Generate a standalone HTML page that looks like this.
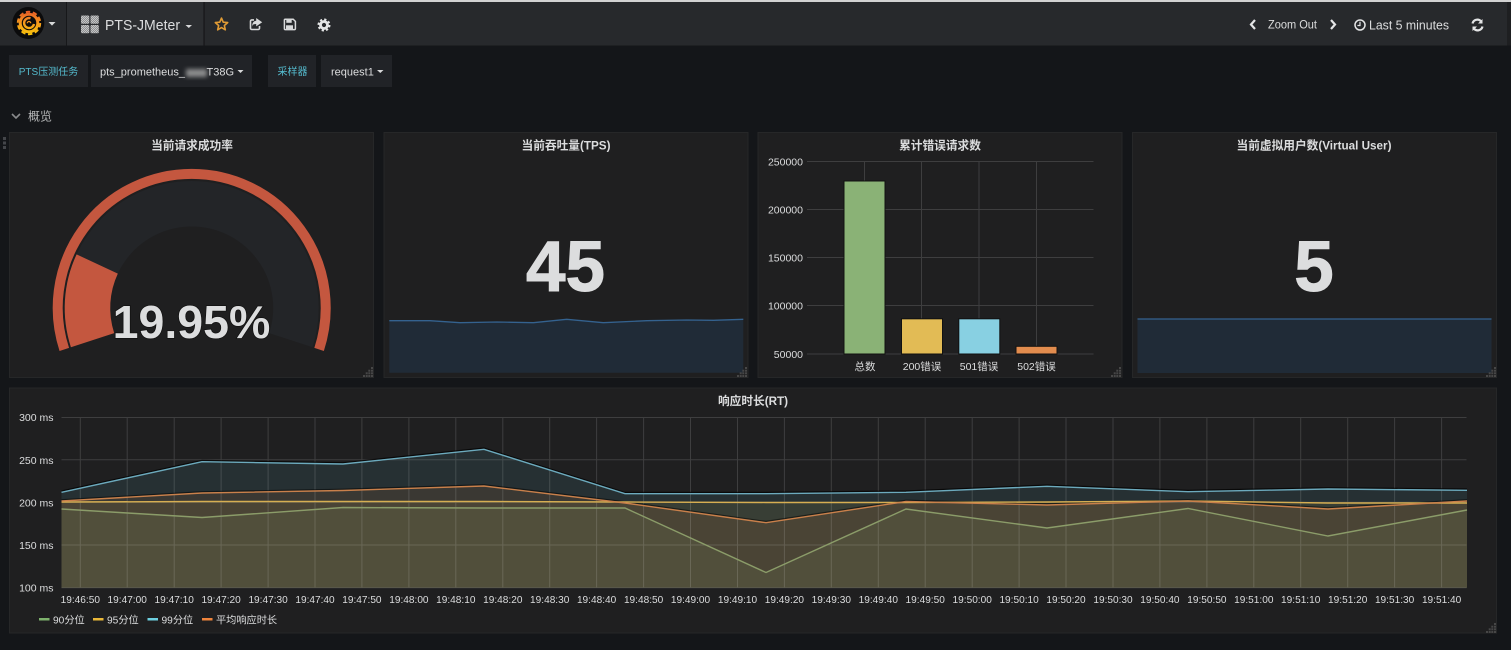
<!DOCTYPE html>
<html><head><meta charset="utf-8"><title>PTS-JMeter</title>
<style>
html,body{margin:0;padding:0;width:1511px;height:650px;overflow:hidden;background:#141619}
svg{display:block;filter:blur(.35px)}
text{font-family:"Liberation Sans","Noto Sans CJK SC",sans-serif;fill:#dcddde}
.t{font-size:11.7px;font-weight:700;text-anchor:middle}
.a{font-size:10.5px}
.x{font-size:10.1px;text-anchor:middle}
.l{font-size:10.2px}
.r{text-anchor:end}
.m{text-anchor:middle}
.g{stroke:#fff;stroke-opacity:.14;stroke-width:1;fill:none}
.p{fill:#1f1f20;stroke:#262728;stroke-width:1}
.v{fill:#212327}
.k{fill:#55bccf;font-size:10px;text-anchor:middle}
.h{fill:#474747}
</style></head><body>
<svg width="1511" height="650" viewBox="0 0 1511 650" xmlns="http://www.w3.org/2000/svg">
<defs>
<linearGradient id="lg" gradientUnits="userSpaceOnUse" x1="29" y1="36" x2="29" y2="10"><stop offset="0" stop-color="#fbca0a"/><stop offset=".5" stop-color="#f59a1c"/><stop offset="1" stop-color="#e8552a"/></linearGradient>
<pattern id="hatch" width="2" height="2" patternUnits="userSpaceOnUse"><rect width="2" height="2" fill="#8e8f90"/><rect width="1" height="1" fill="#c4c5c6"/><rect x="1" y="1" width="1" height="1" fill="#c4c5c6"/></pattern>
<filter id="bl" x="-30%" y="-40%" width="160%" height="180%"><feGaussianBlur stdDeviation="2"/></filter>
<g id="rz"><rect x="8" y="0" width="2" height="2" class="h"/><rect x="5.300" y="2.700" width="2" height="2" class="h"/><rect x="8" y="2.700" width="2" height="2" class="h"/><rect x="2.700" y="5.300" width="2" height="2" class="h"/><rect x="5.300" y="5.300" width="2" height="2" class="h"/><rect x="8" y="5.300" width="2" height="2" class="h"/><rect x="0" y="8" width="2" height="2" class="h"/><rect x="2.700" y="8" width="2" height="2" class="h"/><rect x="5.300" y="8" width="2" height="2" class="h"/><rect x="8" y="8" width="2" height="2" class="h"/></g>
</defs>

<rect width="1511" height="650" fill="#141619"/>

<!-- Navbar -->
<rect x="0" y="0" width="1511" height="2" fill="#d2d2d2"/>
<rect x="0" y="2" width="1507" height="43.5" fill="#27292c"/>
<rect x="1507" y="2" width="4" height="43.5" fill="#1e1f21"/>
<rect x="67" y="2" width="136" height="43.5" fill="#2c2e31"/>
<rect x="66" y="2" width="1" height="43.5" fill="#17181a"/>
<rect x="203.5" y="2" width="1.2" height="43.5" fill="#17181a"/>

<!-- Logo -->
<circle cx="28.3" cy="23" r="16" fill="#0b0b0c"/>
<circle cx="29" cy="23" r="10.300" fill="url(#lg)"/>
<circle cx="29" cy="23" r="11.200" fill="none" stroke="url(#lg)" stroke-width="2" stroke-dasharray="4.400 2.640"/>
<circle cx="29" cy="23" r="7.300" fill="#0b0b0c"/>
<path d="M34 24A5 5 0 1 1 30.500 18.200" fill="none" stroke="url(#lg)" stroke-width="2.400"/>
<path d="M27.200 23.300a1.800 1.800 0 1 1 3.600 0" fill="none" stroke="url(#lg)" stroke-width="1.200"/>
<path d="M48.500 22h7l-3.500 3.600z" fill="#d8d9da"/>

<!-- Dashboard title -->
<rect x="81" y="15.5" width="8.3" height="8.3" rx="1" fill="url(#hatch)"/>
<rect x="90.5" y="15.5" width="8.3" height="8.3" rx="1" fill="url(#hatch)"/>
<rect x="81" y="25" width="8.3" height="8.3" rx="1" fill="url(#hatch)"/>
<rect x="90.5" y="25" width="8.3" height="8.3" rx="1" fill="url(#hatch)"/>
<text x="105" y="30" font-size="14.5" textLength="75" lengthAdjust="spacingAndGlyphs">PTS-JMeter</text>
<path d="M185.5 25h6.500l-3.200 3z" fill="#d8d9da"/>

<!-- Icons -->
<path transform="translate(221.5 24.6)" d="M0-6.500L1.760-2.430 6.180-2 2.850.93 3.820 5.260 0 3-3.820 5.260-2.850.93-6.180-2-1.760-2.430z" fill="none" stroke="#e09b35" stroke-width="1.600" stroke-linejoin="round"/>
<path d="M259.500 26v2.200a1.300 1.300 0 0 1-1.300 1.300h-6.400a1.300 1.300 0 0 1-1.300-1.300v-7a1.300 1.300 0 0 1 1.300-1.300h2.200" fill="none" stroke="#d8d9da" stroke-width="1.600"/>
<path d="M256.200 18l6 4.200-6 4.200v-2.400c-2.400 0-3.600.6-4 2.600-.2-3.400 1.400-5.600 4-5.800z" fill="#d8d9da"/>
<path d="M285.200 19.200h8l2.200 2.200v7.400a.8.8 0 0 1-.8.8h-9.400a.8.8 0 0 1-.8-.8v-8.800a.8.8 0 0 1 .8-.8z" fill="none" stroke="#d8d9da" stroke-width="1.500"/>
<rect x="286.300" y="19" width="5.400" height="3.800" fill="#d8d9da"/>
<rect x="286" y="25.300" width="7" height="3.700" fill="#d8d9da"/>
<circle cx="324" cy="25" r="3.500" fill="none" stroke="#e4e5e6" stroke-width="2.800"/>
<circle cx="324" cy="25" r="5.400" fill="none" stroke="#e4e5e6" stroke-width="2.200" stroke-dasharray="2.200 2.040"/>

<!-- Right navbar -->
<path d="M1255 20l-4 4.500 4 4.500" fill="none" stroke="#e4e5e6" stroke-width="2.200"/>
<text x="1268" y="28.500" font-size="11.500" textLength="49" lengthAdjust="spacingAndGlyphs">Zoom Out</text>
<path d="M1331 20l4 4.500-4 4.500" fill="none" stroke="#e4e5e6" stroke-width="2.200"/>
<circle cx="1360" cy="25" r="5" fill="none" stroke="#e4e5e6" stroke-width="1.500"/>
<path d="M1360 21.800V25.500h-2.600" fill="none" stroke="#e4e5e6" stroke-width="1.200"/>
<text x="1369" y="29.500" font-size="12.500" textLength="80" lengthAdjust="spacingAndGlyphs">Last 5 minutes</text>
<path d="M1472.500 23.500a5 5 0 0 1 8.500-2.300M1482.500 26.500a5 5 0 0 1-8.500 2.300" fill="none" stroke="#e4e5e6" stroke-width="2.200"/>
<path d="M1482.500 19v4.500h-4.500zM1472.500 31v-4.500h4.500z" fill="#e4e5e6"/>

<!-- Template vars -->
<rect x="9" y="55" width="79" height="32" class="v"/>
<text x="48.500" y="75" class="k">PTS压测任务</text>
<rect x="91" y="55" width="161" height="32" class="v"/>
<text x="100" y="75.500" font-size="11">pts_prometheus_</text>
<text x="206.500" y="75.500" font-size="11">T38G</text>
<rect x="186" y="69" width="21" height="8" fill="#8a8b8c" filter="url(#bl)"/>
<path d="M237.500 70h6l-3 3z" fill="#d8d9da"/>
<rect x="268" y="55" width="48" height="32" class="v"/>
<text x="292.500" y="75" class="k">采样器</text>
<rect x="321" y="55" width="71" height="32" class="v"/>
<text x="331" y="75.500" font-size="11">request1</text>
<path d="M377 70h6.500l-3.200 3z" fill="#d8d9da"/>

<!-- Row -->
<path d="M12 114l4 4 4-4" fill="none" stroke="#8a8b8d" stroke-width="1.600"/>
<text x="28" y="120.500" font-size="12" style="fill:#b5b6b7">概览</text>

<!-- Drag handle -->
<rect x="3" y="137" width="3" height="3" fill="#44464a"/><rect x="3" y="141.500" width="3" height="3" fill="#44464a"/><rect x="3" y="146" width="3" height="3" fill="#44464a"/>

<!-- Panels -->
<rect x="9.500" y="132.500" width="364" height="245" class="p"/>
<rect x="384" y="132.500" width="364" height="245" class="p"/>
<rect x="758" y="132.500" width="364" height="245" class="p"/>
<rect x="1132.500" y="132.500" width="364" height="245" class="p"/>
<rect x="9.500" y="388" width="1487" height="245" class="p"/>

<text x="192" y="149.500" class="t">当前请求成功率</text>
<text x="566" y="149.500" class="t">当前吞吐量(TPS)</text>
<text x="940" y="149.500" class="t">累计错误请求数</text>
<text x="1314" y="149.500" class="t">当前虚拟用户数(Virtual User)</text>
<text x="753" y="405" class="t">响应时长(RT)</text>

<!-- Gauge -->
<path d="M64.300 349.400A134 134 0 1 1 319.100 349.400" fill="none" stroke="#c4573f" stroke-width="10"/>
<path d="M92.550 340.200A104.250 104.250 0 1 1 290.850 340.200" fill="none" stroke="#232528" stroke-width="45.500"/>
<path d="M92.550 340.200A104.250 104.250 0 0 1 97.200 264" fill="none" stroke="#c4573f" stroke-width="45.500"/>
<text x="191.500" y="338" font-size="46.500" font-weight="700" text-anchor="middle" style="fill:#dcddde;paint-order:stroke;stroke:#111;stroke-width:1.500px">19.95%</text>

<!-- 45 -->
<path d="M389.300 320.700L430 320.700 460 322.700 496.700 322 533.300 322.700 566.700 319.300 603.300 322.700 646.700 320.700 686.700 320 713.300 320.300 743.300 319.300V372.700H389.300z" fill="#202b37"/>
<path d="M389.300 320.700L430 320.700 460 322.700 496.700 322 533.300 322.700 566.700 319.300 603.300 322.700 646.700 320.700 686.700 320 713.300 320.300 743.300 319.300" fill="none" stroke="#34628f" stroke-width="1.300"/>
<text x="565.500" y="291" font-size="71" font-weight="700" text-anchor="middle" style="fill:#dcddde;stroke:#dcddde;stroke-width:1px">45</text>

<!-- 5 -->
<rect x="1137.500" y="319" width="354" height="54" fill="#202b37"/>
<path d="M1137.500 319H1491.500" stroke="#34628f" stroke-width="1.300" fill="none"/>
<text x="1314" y="291" font-size="71" font-weight="700" text-anchor="middle" style="fill:#dcddde;stroke:#dcddde;stroke-width:1px">5</text>

<!-- Bars -->
<g class="g">
<path d="M807 161.500H1093.500M807 209.500H1093.500M807 257.500H1093.500M807 305.500H1093.500M807 354H1093.500M864.500 161.500V354M921.500 161.500V354M979 161.500V354M1036.500 161.500V354"/>
</g>
<g stroke="#111" stroke-width="1">
<rect x="844" y="181" width="41" height="173" fill="#8ab276"/>
<rect x="901.500" y="318.800" width="41" height="35.200" fill="#e2bb55"/>
<rect x="958.800" y="318.800" width="41" height="35.200" fill="#88d0e2"/>
<rect x="1016" y="346.300" width="41" height="7.700" fill="#e28c4e"/>
</g>
<g class="a">
<text x="803" y="165.500" class="r">250000</text>
<text x="803" y="213.500" class="r">200000</text>
<text x="803" y="261.500" class="r">150000</text>
<text x="803" y="309.500" class="r">100000</text>
<text x="803" y="358" class="r">50000</text>
<text x="865" y="370" class="m">总数</text>
<text x="922" y="370" class="m">200错误</text>
<text x="979" y="370" class="m">501错误</text>
<text x="1036.500" y="370" class="m">502错误</text>
</g>

<!-- Graph fills -->
<path d="M61.500 509L202 517.500 343 507.500 484 508 625 508 766 572.500 906 509 1047 528 1188 508.500 1328 536 1467 510V587.700H61.500z" fill="#7eb26d" fill-opacity=".1"/>
<path d="M61.500 502L202 501.500 343 501.500 484 501.500 625 502 766 502.500 906 502.500 1047 502 1188 501 1328 503 1467 503V587.700H61.500z" fill="#eab839" fill-opacity=".1"/>
<path d="M61.500 492.300L202 461.700 343 464 484 449.300 625 493.700 766 493.700 906 492.300 1047 486.300 1188 491.700 1328 489 1467 490.300V587.700H61.500z" fill="#6ed0e0" fill-opacity=".1"/>
<path d="M61.500 501L202 493 343 490.500 484 486 625 503 766 522.700 906 501.500 1047 505 1188 501 1328 509 1467 501V587.700H61.500z" fill="#ef843c" fill-opacity=".1"/>

<!-- Graph grid -->
<path class="g" d="M61.500 417.500H1466.500M61.500 459.700H1466.500M61.500 502.300H1466.500M61.500 545H1466.500M61.500 587.700H1466.500M80.300 417.500V587.700M127.200 417.500V587.700M174.200 417.500V587.700M221.100 417.500V587.700M268.100 417.500V587.700M315 417.500V587.700M361.900 417.500V587.700M408.900 417.500V587.700M455.800 417.500V587.700M502.800 417.500V587.700M549.700 417.500V587.700M596.600 417.500V587.700M643.600 417.500V587.700M690.500 417.500V587.700M737.500 417.500V587.700M784.400 417.500V587.700M831.300 417.500V587.700M878.300 417.500V587.700M925.200 417.500V587.700M972.200 417.500V587.700M1019.100 417.500V587.700M1066 417.500V587.700M1113 417.500V587.700M1159.900 417.500V587.700M1206.900 417.500V587.700M1253.800 417.500V587.700M1300.700 417.500V587.700M1347.700 417.500V587.700M1394.600 417.500V587.700M1441.600 417.500V587.700"/>

<!-- Graph lines -->
<g fill="none" stroke-width="1.400">
<path transform="translate(0 -1.200)" d="M61.500 492.300L202 461.700 343 464 484 449.300 625 493.700 766 493.700 906 492.300 1047 486.300 1188 491.700 1328 489 1467 490.300" stroke="#000" stroke-opacity=".7"/>
<path transform="translate(0 -1.200)" d="M61.500 501L202 493 343 490.500 484 486 625 503 766 522.700 906 501.500 1047 505 1188 501 1328 509 1467 501" stroke="#000" stroke-opacity=".5"/>
<path d="M61.500 509L202 517.500 343 507.500 484 508 625 508 766 572.500 906 509 1047 528 1188 508.500 1328 536 1467 510" stroke="#8b9c69"/>
<path d="M61.500 502L202 501.500 343 501.500 484 501.500 625 502 766 502.500 906 502.500 1047 502 1188 501 1328 503 1467 503" stroke="#d6ae52"/>
<path d="M61.500 492.300L202 461.700 343 464 484 449.300 625 493.700 766 493.700 906 492.300 1047 486.300 1188 491.700 1328 489 1467 490.300" stroke="#6caabd"/>
<path d="M61.500 501L202 493 343 490.500 484 486 625 503 766 522.700 906 501.500 1047 505 1188 501 1328 509 1467 501" stroke="#c9804b"/>
</g>

<!-- Graph y labels -->
<g class="a">
<text x="53.500" y="421" class="r">300 ms</text>
<text x="53.500" y="464" class="r">250 ms</text>
<text x="53.500" y="506.500" class="r">200 ms</text>
<text x="53.500" y="549" class="r">150 ms</text>
<text x="53.500" y="591.500" class="r">100 ms</text>
</g>

<!-- Graph x labels -->
<g class="x">
<text x="80.300" y="603">19:46:50</text><text x="127.200" y="603">19:47:00</text><text x="174.200" y="603">19:47:10</text><text x="221.100" y="603">19:47:20</text><text x="268.100" y="603">19:47:30</text><text x="315" y="603">19:47:40</text><text x="361.900" y="603">19:47:50</text><text x="408.900" y="603">19:48:00</text><text x="455.800" y="603">19:48:10</text><text x="502.800" y="603">19:48:20</text><text x="549.700" y="603">19:48:30</text><text x="596.600" y="603">19:48:40</text><text x="643.600" y="603">19:48:50</text><text x="690.500" y="603">19:49:00</text><text x="737.500" y="603">19:49:10</text><text x="784.400" y="603">19:49:20</text><text x="831.300" y="603">19:49:30</text><text x="878.300" y="603">19:49:40</text><text x="925.200" y="603">19:49:50</text><text x="972.200" y="603">19:50:00</text><text x="1019.100" y="603">19:50:10</text><text x="1066" y="603">19:50:20</text><text x="1113" y="603">19:50:30</text><text x="1159.900" y="603">19:50:40</text><text x="1206.900" y="603">19:50:50</text><text x="1253.800" y="603">19:51:00</text><text x="1300.700" y="603">19:51:10</text><text x="1347.700" y="603">19:51:20</text><text x="1394.600" y="603">19:51:30</text><text x="1441.600" y="603">19:51:40</text>
</g>

<!-- Legend -->
<rect x="39" y="618" width="10.500" height="2.500" fill="#7eb26d"/>
<rect x="93" y="618" width="10.500" height="2.500" fill="#eab839"/>
<rect x="147.500" y="618" width="10.500" height="2.500" fill="#6ed0e0"/>
<rect x="202" y="618" width="10.500" height="2.500" fill="#ef843c"/>
<g class="l">
<text x="53" y="623.500">90分位</text>
<text x="107" y="623.500">95分位</text>
<text x="161.500" y="623.500">99分位</text>
<text x="216" y="623.500">平均响应时长</text>
</g>

<!-- Resize handles -->
<use href="#rz" x="363" y="367"/>
<use href="#rz" x="737" y="367"/>
<use href="#rz" x="1111" y="367"/>
<use href="#rz" x="1486" y="367"/>
<use href="#rz" x="1486" y="623"/>
</svg>
</body></html>
